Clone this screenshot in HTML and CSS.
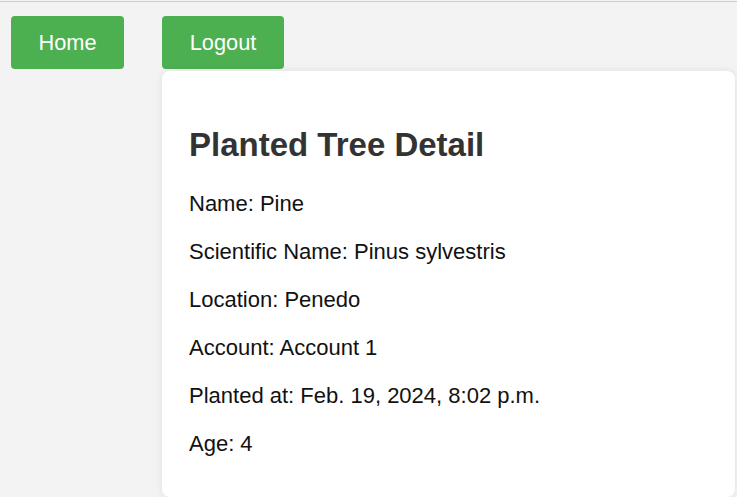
FILE: index.html
```html
<!DOCTYPE html>
<html lang="en">
<head>
<meta charset="utf-8">
<title>Planted Tree Detail</title>
<link rel="stylesheet" href="styles.css">
</head>
<body>
<div class="topline"></div>
<div class="layout">
  <div class="nav-col">
    <a class="btn" href="#">Home</a>
  </div>
  <div class="main-col">
    <form class="logout-form">
      <button class="btn" type="button">Logout</button>
    </form>
    <div class="card">
      <h2 class="title">Planted Tree Detail</h2>
      <p class="field">Name: Pine</p>
      <p class="field">Scientific Name: Pinus sylvestris</p>
      <p class="field">Location: Penedo</p>
      <p class="field">Account: Account 1</p>
      <p class="field">Planted at: Feb. 19, 2024, 8:02 p.m.</p>
      <p class="field">Age: 4</p>
    </div>
  </div>
</div>
</body>
</html>
```

FILE: styles.css
```css
html, body {
  margin: 0;
  padding: 0;
  background: #f3f3f3;
  font-family: "Liberation Sans", Arial, sans-serif;
  height: 100%;
  overflow: hidden;
}

.topline {
  margin-top: 1px;
  border-top: 1px solid #cdcdcd;
}

.layout {
  display: flex;
  gap: 38px;
  padding: 14px 0 0 11px;
}

.nav-col {
  flex: 0 0 auto;
}

.main-col {
  display: flex;
  flex-direction: column;
  align-items: flex-start;
  gap: 2px;
}

.logout-form {
  margin: 0;
}

.btn {
  display: inline-block;
  box-sizing: border-box;
  height: 53px;
  line-height: 53px;
  padding: 0;
  background: #4caf50;
  color: #fff;
  font-family: "Liberation Sans", Arial, sans-serif;
  font-size: 21.8px;
  text-decoration: none;
  text-align: center;
  border: none;
  border-radius: 4px;
  cursor: pointer;
}

.nav-col .btn {
  width: 113px;
}

.main-col .btn {
  width: 122px;
}

.card {
  box-sizing: border-box;
  width: 573px;
  height: 426px;
  background: #fff;
  border-radius: 8px;
  box-shadow: 0 0 8px rgba(0, 0, 0, 0.08);
  padding: 28px 27px 18px;
}

.title {
  margin: 27px 0;
  font-size: 33px;
  font-weight: bold;
  color: #333;
  line-height: 38px;
}

.field {
  margin: 21.6px 0;
  font-size: 22px;
  line-height: 26.4px;
  color: #111;
}
```
